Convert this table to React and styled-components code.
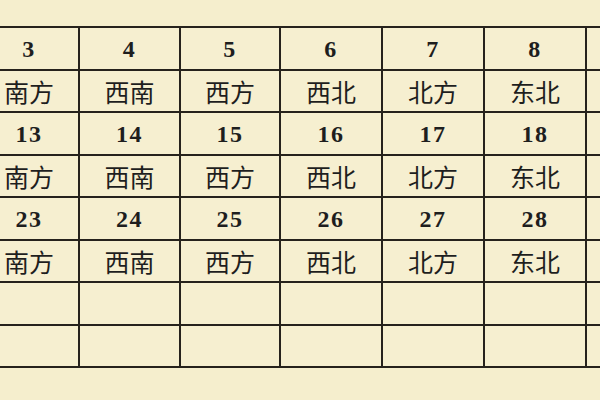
import React from "react";
import styled, { createGlobalStyle } from "styled-components";

const Global = createGlobalStyle`
  html, body {
    margin: 0;
    padding: 0;
    background: #f5eecd;
    overflow: hidden;
  }
  body {
    width: 600px;
    height: 400px;
  }
`;

const Page = styled.div`
  width: 600px;
  height: 400px;
  overflow: hidden;
  background: #f5eecd;
  padding-top: 26px;
  box-sizing: border-box;
`;

const Grid = styled.div`
  display: grid;
  grid-template-columns: 98px 99px 98px 100px 100px 100px 100px;
  grid-template-rows: repeat(8, 40.5px);
  gap: 2px;
  padding: 2px;
  margin-left: -22px;
  width: max-content;
  background: #26221c;
`;

const Cell = styled.div`
  background: #f6efd0;
  display: flex;
  align-items: center;
  justify-content: center;
  color: #1e1e1e;
  white-space: nowrap;
  font-family: ${(p) =>
    p.$num
      ? '"Liberation Serif", "DejaVu Serif", serif'
      : '"Noto Sans CJK SC", "Noto Sans", sans-serif'};
  font-size: ${(p) => (p.$num ? "24px" : "25px")};
  font-weight: ${(p) => (p.$num ? 700 : 400)};
  letter-spacing: ${(p) => (p.$num ? "1.5px" : "0")};
  padding-top: ${(p) => (p.$num ? "3px" : "0")};
  box-sizing: border-box;
`;

const dirs = ["南方", "西南", "西方", "西北", "北方", "东北", ""];
const starts = [3, 13, 23];

export default function App() {
  const cells = [];
  starts.forEach((s) => {
    for (let i = 0; i < 7; i++) {
      cells.push(
        <Cell key={`n${s}-${i}`} $num>
          {i < 6 ? s + i : ""}
        </Cell>
      );
    }
    dirs.forEach((d, i) => {
      cells.push(<Cell key={`d${s}-${i}`}>{d}</Cell>);
    });
  });
  for (let i = 0; i < 14; i++) {
    cells.push(<Cell key={`e${i}`} />);
  }
  return (
    <Page>
      <Global />
      <Grid>{cells}</Grid>
    </Page>
  );
}
